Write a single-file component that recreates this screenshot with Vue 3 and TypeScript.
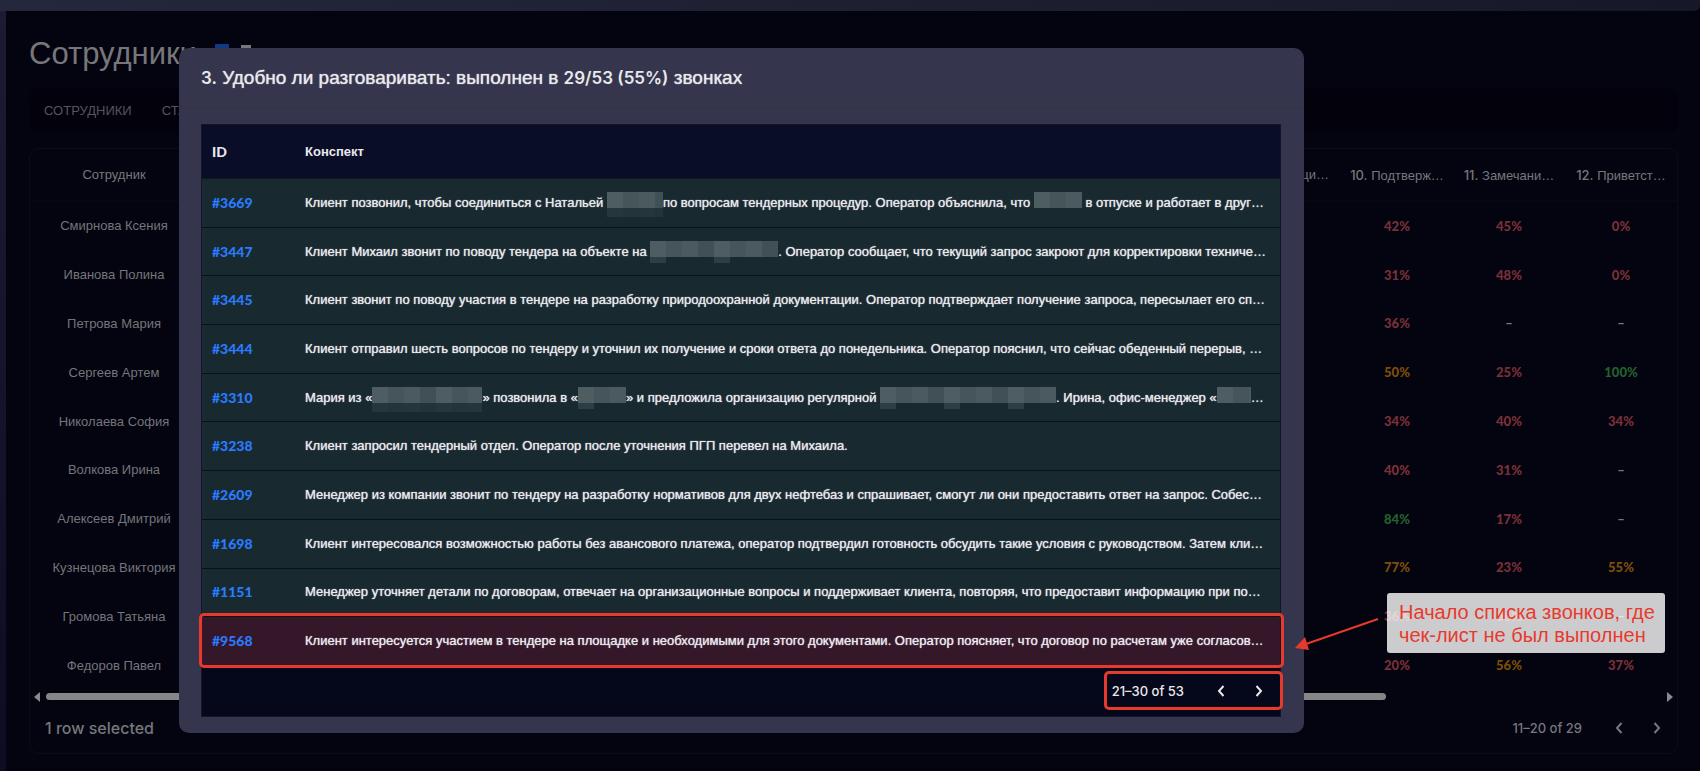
<script setup lang="ts">
interface Employee {
  name: string
  scores: string[]
}

interface Part {
  text?: string
  mask?: string
}

interface Call {
  id: string
  parts: Part[]
  failed?: boolean
}

const employees: Employee[] = [
  { name: 'Смирнова Ксения', scores: ['42%', '45%', '0%'] },
  { name: 'Иванова Полина', scores: ['31%', '48%', '0%'] },
  { name: 'Петрова Мария', scores: ['36%', '–', '–'] },
  { name: 'Сергеев Артем', scores: ['50%', '25%', '100%'] },
  { name: 'Николаева София', scores: ['34%', '40%', '34%'] },
  { name: 'Волкова Ирина', scores: ['40%', '31%', '–'] },
  { name: 'Алексеев Дмитрий', scores: ['84%', '17%', '–'] },
  { name: 'Кузнецова Виктория', scores: ['77%', '23%', '55%'] },
  { name: 'Громова Татьяна', scores: ['36%', '36%', '–'] },
  { name: 'Федоров Павел', scores: ['20%', '56%', '37%'] },
]

const columns = [
  { no: '10.', label: 'Подтверж…' },
  { no: '11.', label: 'Замечани…' },
  { no: '12.', label: 'Приветст…' },
]

const calls: Call[] = [
  {
    id: '#3669',
    parts: [
      { text: 'Клиент позвонил, чтобы соединиться с Натальей ' },
      { mask: 'w56 tall' },
      { text: 'по вопросам тендерных процедур. Оператор объяснила, что ' },
      { mask: 'w48' },
      { text: ' в отпуске и работает в друг…' },
    ],
  },
  {
    id: '#3447',
    parts: [
      { text: 'Клиент Михаил звонит по поводу тендера на объекте на ' },
      { mask: 'w128 bits' },
      { text: '. Оператор сообщает, что текущий запрос закроют для корректировки техниче…' },
    ],
  },
  {
    id: '#3445',
    parts: [
      {
        text: 'Клиент звонит по поводу участия в тендере на разработку природоохранной документации. Оператор подтверждает получение запроса, пересылает его сп…',
      },
    ],
  },
  {
    id: '#3444',
    parts: [
      {
        text: 'Клиент отправил шесть вопросов по тендеру и уточнил их получение и сроки ответа до понедельника. Оператор пояснил, что сейчас обеденный перерыв, …',
      },
    ],
  },
  {
    id: '#3310',
    parts: [
      { text: 'Мария из «' },
      { mask: 'w110 tall' },
      { text: '» позвонила в «' },
      { mask: 'w48 bits' },
      { text: '» и предложила организацию регулярной ' },
      { mask: 'w176 bits' },
      { text: '. Ирина, офис-менеджер «' },
      { mask: 'w34' },
      { text: '…' },
    ],
  },
  {
    id: '#3238',
    parts: [{ text: 'Клиент запросил тендерный отдел. Оператор после уточнения ПГП перевел на Михаила.' }],
  },
  {
    id: '#2609',
    parts: [
      {
        text: 'Менеджер из компании звонит по тендеру на разработку нормативов для двух нефтебаз и спрашивает, смогут ли они предоставить ответ на запрос. Собес…',
      },
    ],
  },
  {
    id: '#1698',
    parts: [
      {
        text: 'Клиент интересовался возможностью работы без авансового платежа, оператор подтвердил готовность обсудить такие условия с руководством. Затем кли…',
      },
    ],
  },
  {
    id: '#1151',
    parts: [
      {
        text: 'Менеджер уточняет детали по договорам, отвечает на организационные вопросы и поддерживает клиента, повторяя, что предоставит информацию при по…',
      },
    ],
  },
  {
    id: '#9568',
    failed: true,
    parts: [
      {
        text: 'Клиент интересуется участием в тендере на площадке и необходимыми для этого документами. Оператор поясняет, что договор по расчетам уже согласов…',
      },
    ],
  },
]

function level(score: string): string {
  const value = parseInt(score, 10)
  if (Number.isNaN(value)) return 'none'
  if (value >= 80) return 'high'
  return value >= 50 ? 'mid' : 'low'
}
</script>

<template>
  <div class="app">
    <div class="topbar"></div>
    <div class="rail"></div>
    <main class="page">
      <h1 class="title">
        Сотрудники
        <svg class="title-icon" width="38" height="32" viewBox="0 0 38 32" aria-hidden="true">
          <rect x="0" y="6" width="14" height="24" rx="1" fill="#0f3a87" />
          <rect x="26" y="7" width="10" height="22" fill="#77777c" />
        </svg>
      </h1>
      <nav class="tabs">
        <a href="#employees">СОТРУДНИКИ</a>
        <a href="#stats">СТАТИСТИКА</a>
      </nav>
      <section class="panel">
        <table class="staff">
          <thead>
            <tr>
              <th class="name">Сотрудник</th>
              <th class="rest">щи…</th>
              <th v-for="c in columns" :key="c.no" class="metric">
                <span class="num">{{ c.no }}</span> {{ c.label }}
              </th>
            </tr>
          </thead>
          <tbody>
            <tr v-for="e in employees" :key="e.name">
              <td>{{ e.name }}</td>
              <td></td>
              <td v-for="(s, i) in e.scores" :key="i" class="score" :class="level(s)">{{ s }}</td>
            </tr>
          </tbody>
        </table>
        <div class="scroller">
          <svg width="6" height="10" viewBox="0 0 6 10" aria-hidden="true"><path d="M6 0v10L0 5z" fill="#8a8a8c" /></svg>
          <div class="track"><div class="thumb"></div></div>
          <svg width="6" height="10" viewBox="0 0 6 10" aria-hidden="true"><path d="M0 0v10L6 5z" fill="#8a8a8c" /></svg>
        </div>
        <footer class="panel-foot">
          <span class="selected">1 row selected</span>
          <span class="range">11–20 of 29</span>
          <button type="button" aria-label="Previous page">
            <svg width="8" height="12" viewBox="0 0 8 12"><path d="M6.500 1 2 6l4.500 5" /></svg>
          </button>
          <button type="button" aria-label="Next page">
            <svg width="8" height="12" viewBox="0 0 8 12"><path d="m1.500 1 4.500 5-4.500 5" /></svg>
          </button>
        </footer>
      </section>
    </main>

    <div class="overlay">
      <div class="modal" role="dialog" aria-labelledby="dialog-title">
        <h2 id="dialog-title" class="modal-title">
          <b>3.</b> Удобно ли разговаривать: выполнен в <b>29/53 (55%)</b> звонках
        </h2>
        <div class="modal-body">
          <div class="grid-wrap">
            <table class="calls">
              <thead>
                <tr>
                  <th class="id">ID</th>
                  <th>Конспект</th>
                </tr>
              </thead>
              <tbody>
                <tr v-for="c in calls" :key="c.id" :class="{ failed: c.failed }">
                  <td class="id"><a href="#call">{{ c.id }}</a></td>
                  <td class="summary"><template v-for="(p, i) in c.parts" :key="i"><span v-if="p.mask" class="mask" :class="p.mask"></span><template v-else>{{ p.text }}</template></template></td>
                </tr>
              </tbody>
            </table>
            <footer class="calls-foot">
              <span class="range">21–30 of 53</span>
              <button type="button" aria-label="Previous page">
                <svg width="8" height="12" viewBox="0 0 8 12"><path d="M6.500 1 2 6l4.500 5" /></svg>
              </button>
              <button type="button" aria-label="Next page">
                <svg width="8" height="12" viewBox="0 0 8 12"><path d="m1.500 1 4.500 5-4.500 5" /></svg>
              </button>
            </footer>
            <div class="frame frame-row"></div>
            <div class="frame frame-pager"></div>
          </div>
        </div>
      </div>
    </div>

    <svg class="arrow" width="88" height="36" viewBox="0 0 88 36" aria-hidden="true">
      <path d="M84 3 12 28" stroke="#e8392d" stroke-width="2" fill="none" />
      <path d="M1 32 11 21 15 34z" fill="#e8392d" />
    </svg>
    <p class="note">Начало списка звонков, где<br />чек-лист не был выполнен</p>
  </div>
</template>

<style>
body {
  background: #03040f;
}
</style>

<style scoped>
.app {
  position: relative;
  box-sizing: border-box;
  min-height: 100vh;
  padding: 11px 22px 16px 29px;
  background: #03040f;
  color: #77777b;
  font-family: "Liberation Sans", Arial, sans-serif;
  font-size: 13px;
  overflow: hidden;
}
.topbar {
  position: absolute;
  inset: 0 0 auto 0;
  height: 11px;
  background: linear-gradient(90deg, #25273c, #171827);
  border-bottom-right-radius: 6px;
}
.rail {
  position: absolute;
  inset: 11px auto 0 0;
  width: 6px;
  background: linear-gradient(#1b1c32, #0c0d21);
}
.title {
  display: flex;
  align-items: center;
  gap: 18px;
  margin: 0;
  padding: 25px 0 16px;
  height: 36px;
  font-size: 31px;
  font-weight: 400;
  line-height: 36px;
}
.tabs {
  display: flex;
  align-items: center;
  gap: 30px;
  height: 45px;
  padding: 0 15px;
  border-radius: 10px;
  background: #03020c;
}
.tabs a {
  color: #55555a;
  text-decoration: none;
}
.panel {
  margin-top: 15px;
  border: 1px solid #0b0c14;
  border-radius: 10px;
}
table {
  width: 100%;
  border-collapse: separate;
  border-spacing: 0;
  table-layout: fixed;
}
.staff {
  height: 541px;
  text-align: center;
}
.staff th {
  box-sizing: border-box;
  height: 53px;
  padding: 0;
  border-bottom: 2px solid #08080c;
  font-weight: 400;
  white-space: nowrap;
}
.staff td {
  padding: 0;
  border-bottom: 1px solid #06060d;
  color: #75757a;
}
.staff .name {
  width: 168px;
}
.staff .rest {
  padding-right: 12px;
  text-align: right;
}
.staff .metric {
  width: 112px;
}
.num,
.range,
.selected {
  font-family: Inter, "Liberation Sans", sans-serif;
  font-weight: 500;
}
.staff .score {
  font-family: Lato, "Liberation Sans", sans-serif;
  font-weight: 900;
}
.staff .low {
  color: #7b3037;
}
.staff .mid {
  color: #7f4e08;
}
.staff .high {
  color: #24612e;
}
.scroller {
  display: flex;
  align-items: center;
  gap: 6px;
  height: 13px;
  padding: 0 4px;
}
.track {
  flex: 1;
}
.thumb {
  width: 83%;
  height: 7px;
  border-radius: 4px;
  background: #868688;
}
.panel-foot,
.calls-foot {
  display: flex;
  align-items: center;
  justify-content: flex-end;
  height: 50px;
}
.panel-foot {
  padding: 0 8px 0 15px;
}
.selected {
  margin-right: auto;
  font-size: 16px;
}
button {
  display: grid;
  place-items: center;
  width: 24px;
  height: 24px;
  margin-left: 14px;
  padding: 0;
  border: 0;
  background: none;
  color: inherit;
}
.range + button {
  margin-left: 25px;
}
button path {
  fill: none;
  stroke: currentColor;
  stroke-width: 2;
}
.overlay {
  position: absolute;
  inset: 0;
  padding: 48px 396px 38px 179px;
}
.modal {
  border-radius: 10px;
  background: #35364d;
  color: #e9e9ec;
}
.modal-title {
  margin: 0;
  padding: 17px 22px 18px;
  height: 25px;
  border-bottom: 1px solid #34343f;
  font-size: 19px;
  font-weight: 400;
  line-height: 25px;
  text-shadow: 0 0 1px currentColor;
}
.modal-title b {
  font-family: Inter, "Liberation Sans", sans-serif;
  font-size: 17px;
  font-weight: 600;
  text-shadow: none;
}
.modal-body {
  padding: 15px 23px 16px 22px;
}
.grid-wrap {
  position: relative;
  border: 1px solid #14152b;
  background: #05071a;
}
.calls {
  height: 541px;
  text-align: left;
}
.calls th {
  box-sizing: border-box;
  height: 54px;
  padding: 0;
  border-bottom: 1px solid #14161f;
  background: #0a0d27;
  font-weight: 700;
}
.calls .id {
  width: 93px;
  padding: 0 0 0 10px;
  font-family: Lato, "Liberation Sans", sans-serif;
  font-size: 14px;
  font-weight: 900;
}
.calls th.id {
  box-sizing: content-box;
  height: 53px;
}
.calls td {
  padding: 0;
  border-bottom: 1px solid #0d1114;
  background: #182a30;
  line-height: 16px;
  white-space: nowrap;
}
.calls .failed td {
  background: #35172a;
}
.calls .id a {
  color: #2a7bff;
  text-decoration: none;
}
.summary {
  text-shadow: 0 0 1px currentColor;
}
.mask {
  --tiles: repeating-linear-gradient(90deg, #4d5d62 0 16px, #45555a 16px 32px, #4a5a5f 32px 48px, #405055 48px 64px);
  position: relative;
  display: inline-block;
  height: 16px;
  margin-top: -6px;
  vertical-align: -1px;
  background: var(--tiles);
}
.tall::after,
.bits::after {
  content: "";
  position: absolute;
  inset: 100% 0 auto 0;
  height: 9px;
  background: var(--tiles);
  opacity: 0.25;
}
.bits::after {
  height: 6px;
  background: repeating-linear-gradient(90deg, #4d5d62 0 16px, transparent 16px 64px);
  opacity: 0.4;
}
.w34 { width: 34px; }
.w48 { width: 48px; }
.w56 { width: 56px; }
.w110 { width: 110px; }
.w128 { width: 128px; }
.w176 { width: 176px; }
.calls-foot {
  padding-right: 9px;
}
.frame {
  position: absolute;
  box-sizing: border-box;
  border: 3px solid #e8392d;
  border-radius: 5px;
}
.frame-row {
  inset: auto -4px 48px -3px;
  height: 55px;
}
.frame-pager {
  right: -3px;
  bottom: 6px;
  width: 179px;
  height: 39px;
}
.arrow {
  position: absolute;
  top: 616px;
  right: 318px;
}
.note {
  position: absolute;
  top: 593px;
  right: 35px;
  box-sizing: border-box;
  width: 278px;
  height: 60px;
  margin: 0;
  padding: 8px 12px;
  border-radius: 3px;
  background: rgba(255, 255, 255, 0.8);
  color: #e8392d;
  font-size: 20px;
  line-height: 23px;
  white-space: nowrap;
}
</style>
